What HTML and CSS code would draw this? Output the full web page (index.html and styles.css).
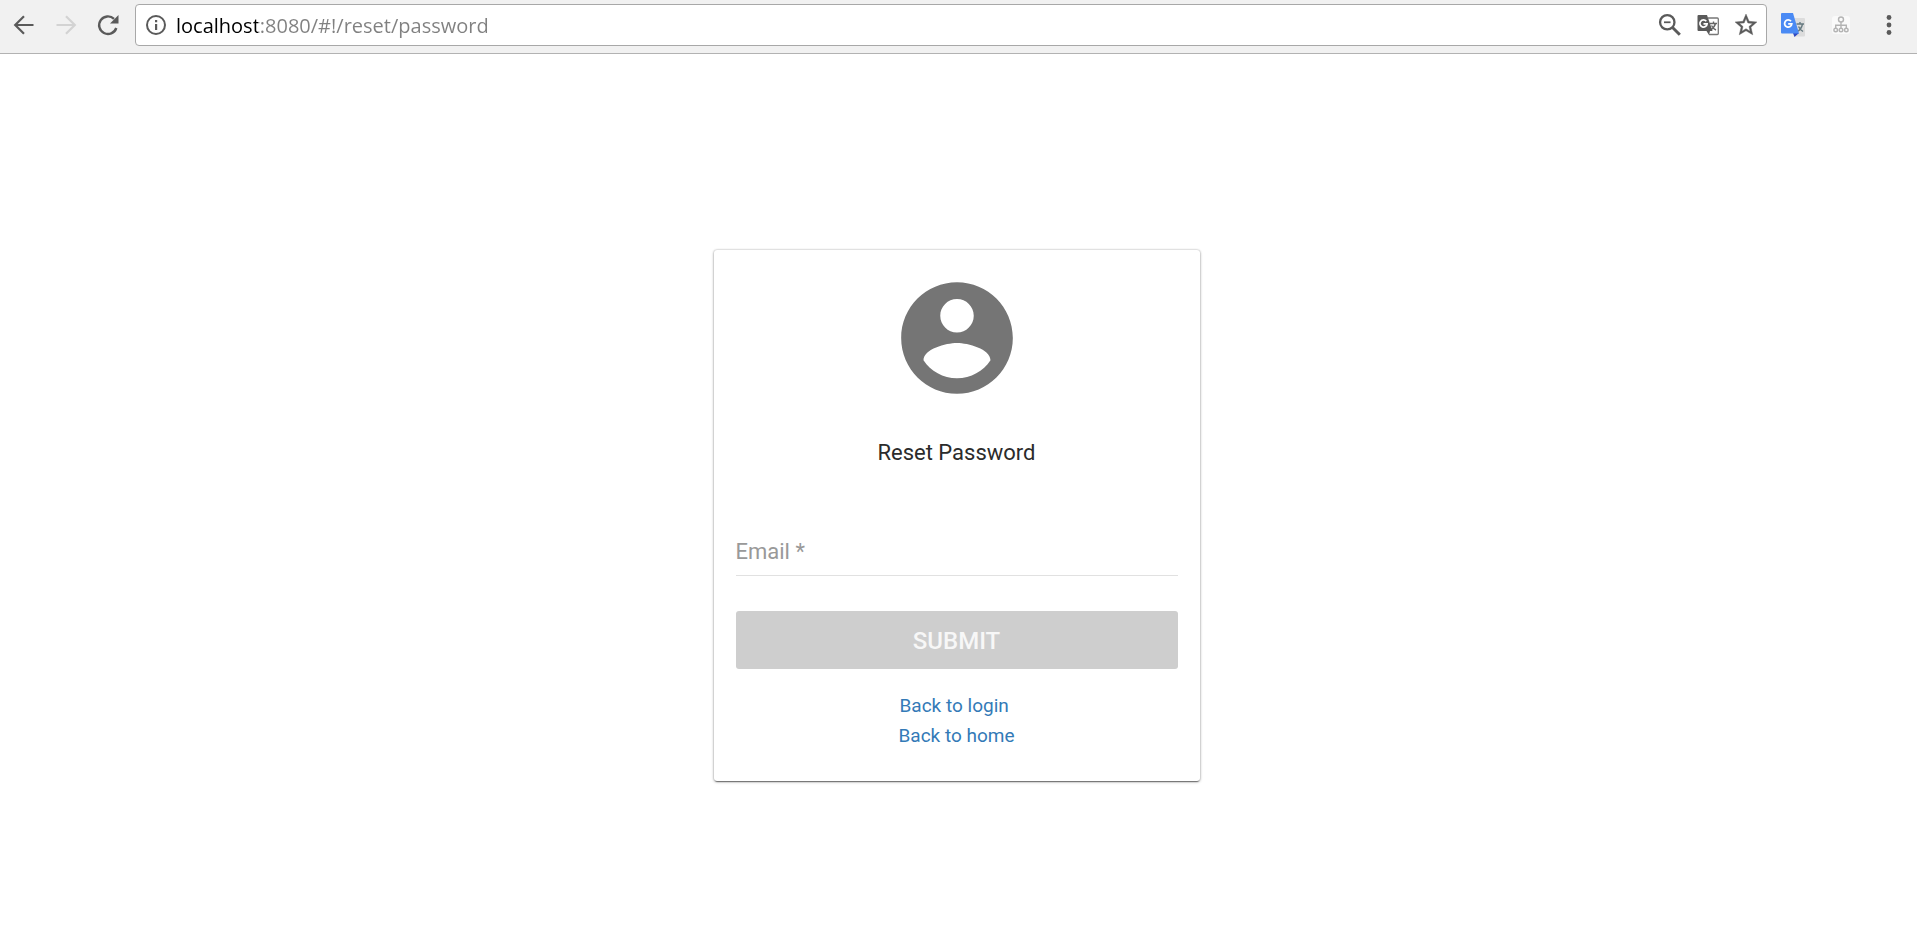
FILE: index.html
```html
<!DOCTYPE html>
<html lang="en">
<head>
<meta charset="utf-8">
<title>Reset Password</title>
<link rel="stylesheet" href="styles.css">
</head>
<body>
<header class="toolbar">
  <nav class="nav" aria-label="Browser navigation">
    <button class="tool" type="button" aria-label="Back">
      <svg class="icon" viewBox="0 0 24 24"><path d="M21.500 12H3.500M12 3.200L3.200 12l8.800 8.800" fill="none" stroke="#5a5a5a" stroke-width="2.200"/></svg>
    </button>
    <button class="tool" type="button" aria-label="Forward" disabled>
      <svg class="icon" viewBox="0 0 24 24"><path d="M2.500 12h18M12 3.200L20.800 12 12 20.800" fill="none" stroke="#d3d3d3" stroke-width="2.200"/></svg>
    </button>
    <button class="tool" type="button" aria-label="Reload">
      <svg class="icon" viewBox="0 0 24 24"><path d="M20.300 15A8.800 8.800 0 1 1 18 5.800" fill="none" stroke="#5a5a5a" stroke-width="2.400"/><path d="M22.500 2v8.500H14z" fill="#5a5a5a"/></svg>
    </button>
  </nav>
  <div class="omnibox">
    <button class="tool" type="button" aria-label="Site information">
      <svg class="icon" viewBox="0 0 24 24"><circle cx="12" cy="12" r="9" fill="none" stroke="#5a5a5a" stroke-width="2"/><path d="M11 11h2.200v6H11zM11 7h2.200v2.200H11z" fill="#5a5a5a"/></svg>
    </button>
    <input class="url" type="text" aria-label="Address" value="localhost:8080/#!/reset/password">
    <div class="actions">
      <button class="tool" type="button" aria-label="Zoom out">
        <svg class="icon" viewBox="1 1 22 22"><circle cx="9.500" cy="9.500" r="6.600" fill="none" stroke="#5a5a5a" stroke-width="2.100"/><path d="M14.300 14.300l6.700 6.700" stroke="#5a5a5a" stroke-width="2.700"/><path d="M6.500 9.500h6" stroke="#5a5a5a" stroke-width="1.600"/></svg>
      </button>
      <button class="tool" type="button" aria-label="Translate this page">
        <svg class="icon" viewBox="0 0 24 24"><path d="M12 5h9.300q1 0 1 1v14.500q0 1-1 1H13" fill="#fff" stroke="#777" stroke-width="1.300"/><path d="M14 10.500h7M17.500 8.500v2M19.500 10.500q-1 4-5 6.500M15.500 12.500q1.500 3 4.500 4.500" fill="none" stroke="#666" stroke-width="1.400"/><path d="M2.500 2H11l5.500 16H14l-1 4-2.500-4h-8q-1 0-1-1V3q0-1 1-1z" fill="#5a5a5a"/><path d="M10.300 8.200a3.600 3.600 0 1 0 .8 2.600H7.500" fill="none" stroke="#fff" stroke-width="1.700"/></svg>
      </button>
      <button class="tool" type="button" aria-label="Bookmark this page">
        <svg class="icon" viewBox="1 1 22 22"><path fill="#5a5a5a" stroke="#5a5a5a" stroke-width=".4" d="M22 9.240l-7.190-.62L12 2 9.190 8.630 2 9.240l5.460 4.730L5.820 21 12 17.270 18.180 21l-1.630-7.030L22 9.240zM12 15.400l-3.760 2.270 1-4.280-3.320-2.880 4.380-.38L12 6.100l1.710 4.040 4.380.38-3.320 2.880 1 4.280L12 15.400z"/></svg>
      </button>
    </div>
  </div>
  <div class="extensions">
    <button class="tool" type="button" aria-label="Google Translate extension">
      <svg class="icon" viewBox="0 0 24 24"><path d="M9 5h14q1 0 1 1v16.500q0 1-1 1H13z" fill="#dcdcdc"/><path d="M15.500 11h7.500M19 9v2M21.500 11q-1 5-5 7.500M17.500 13.500q1.500 3 4.500 5" fill="none" stroke="#667a80" stroke-width="1.400"/><path d="M12 20h6l-4.500 4z" fill="#3049c0"/><path d="M1 0h11l6 20.500H1q-1 0-1-1V1q0-1 1-1z" fill="#4a8af4"/><path d="M10 8.300a3.600 3.600 0 1 0 .8 2.500H7.200" fill="none" stroke="#fff" stroke-width="1.800"/></svg>
    </button>
    <button class="tool" type="button" aria-label="Sitemap extension">
      <svg class="icon" viewBox="0 0 24 24"><rect x="3" y="3" width="18" height="18" rx="3" fill="#fafafa"/><g fill="none" stroke="#b4b4b4" stroke-width="1.400"><circle cx="12" cy="6.500" r="2.500"/><circle cx="6.700" cy="17" r="1.800"/><circle cx="12" cy="17" r="1.800"/><circle cx="17.300" cy="17" r="1.800"/><path d="M12 9v6M6.700 15v-2.800h10.600V15"/></g></svg>
    </button>
    <button class="tool" type="button" aria-label="Menu">
      <svg class="icon" viewBox="0 0 24 24"><g fill="#5a5a5a"><circle cx="12" cy="4.500" r="2.400"/><circle cx="12" cy="12" r="2.400"/><circle cx="12" cy="19.500" r="2.400"/></g></svg>
    </button>
  </div>
</header>
<main class="page">
  <form class="card">
    <svg class="avatar" viewBox="0 0 24 24" role="img" aria-label="Account"><path fill="#757575" d="M12 2C6.480 2 2 6.480 2 12s4.480 10 10 10 10-4.480 10-10S17.520 2 12 2zm0 3c1.660 0 3 1.340 3 3s-1.340 3-3 3-3-1.340-3-3 1.340-3 3-3zm0 14.200c-2.500 0-4.710-1.280-6-3.220.030-1.990 4-3.080 6-3.080 1.990 0 5.970 1.090 6 3.080-1.290 1.940-3.500 3.220-6 3.220z"/></svg>
    <h1 class="title">Reset Password</h1>
    <div class="field">
      <label class="field-label" for="email">Email *</label>
      <input class="field-input" id="email" type="email" required>
    </div>
    <button class="submit" type="submit" disabled>SUBMIT</button>
    <nav class="links" aria-label="Account links">
      <a class="link" href="#!/login">Back to login&nbsp;</a>
      <a class="link" href="#!/">Back to home</a>
    </nav>
  </form>
</main>
</body>
</html>
```
FILE: styles.css
```css
* {
  box-sizing: border-box;
}

body {
  display: flex;
  flex-direction: column;
  min-height: 100vh;
  margin: 0;
  background: #fff;
  color: #2b2b2b;
  font-family: Roboto, "Liberation Sans", sans-serif;
}

.toolbar {
  display: flex;
  align-items: center;
  padding: 4px 16px 7px 12px;
  border-bottom: 1px solid #b2b2b2;
  background: #f1f1f1;
}

.nav {
  display: flex;
  gap: 18px;
  padding-right: 15px;
}

.tool {
  display: flex;
  padding: 0;
  border: 0;
  background: none;
}

.icon {
  display: block;
  width: 24px;
  height: 24px;
}

.omnibox {
  display: flex;
  flex: 1;
  align-items: center;
  height: 42px;
  padding: 0 8px;
  border: 1px solid #a8a8a8;
  border-radius: 4px;
  background: #fff;
}

.url {
  flex: 1;
  min-width: 0;
  margin-left: 8px;
  padding: 2px 0 0;
  border: 0;
  outline: 0;
  background: linear-gradient(90deg, #000 82px, #808080 82px);
  -webkit-background-clip: text;
  background-clip: text;
  -webkit-text-fill-color: transparent;
  font: 20px/28px "Open Sans", "Noto Sans", sans-serif;
}

.actions {
  display: flex;
  gap: 14px;
}

.extensions {
  display: flex;
  gap: 24px;
  padding-left: 14px;
}

.page {
  display: flex;
  flex: 1;
  justify-content: center;
  align-items: flex-start;
  padding: 196px 20px 24px 16px;
}

.card {
  display: flex;
  flex-direction: column;
  width: 100%;
  max-width: 486px;
  padding: 21px 22px 30px;
  border-radius: 3px;
  background: #fff;
  box-shadow: 0 1px 3px rgba(0, 0, 0, 0.3), 0 0 2px rgba(0, 0, 0, 0.3), 0 2px 1px -1px rgba(0, 0, 0, 0.4);
}

.avatar {
  align-self: center;
  width: 134px;
  height: 134px;
}

.title {
  margin: 33px 0 69px;
  font-size: 22px;
  font-weight: 400;
  line-height: 30px;
  text-align: center;
}

.field {
  display: grid;
  border-bottom: 1px solid #e1e1e1;
}

.field-label,
.field-input {
  grid-area: 1 / 1;
  font: 400 22px/30px Roboto, "Liberation Sans", sans-serif;
}

.field-label {
  padding-bottom: 8px;
  color: #999;
}

.field-input {
  width: 100%;
  padding: 0 0 8px;
  border: 0;
  outline: 0;
  background: transparent;
}

.submit {
  height: 58px;
  margin-top: 35px;
  padding: 2px 0 0;
  border: 0;
  border-radius: 3px;
  background: #cecece;
  color: #f7f7f7;
  font: 500 24px/30px Roboto, "Liberation Sans", sans-serif;
}

.links {
  display: flex;
  flex-direction: column;
  align-items: center;
  margin-top: 22px;
}

.link {
  color: #337ab7;
  font-size: 19px;
  line-height: 30px;
  text-decoration: none;
}
```
